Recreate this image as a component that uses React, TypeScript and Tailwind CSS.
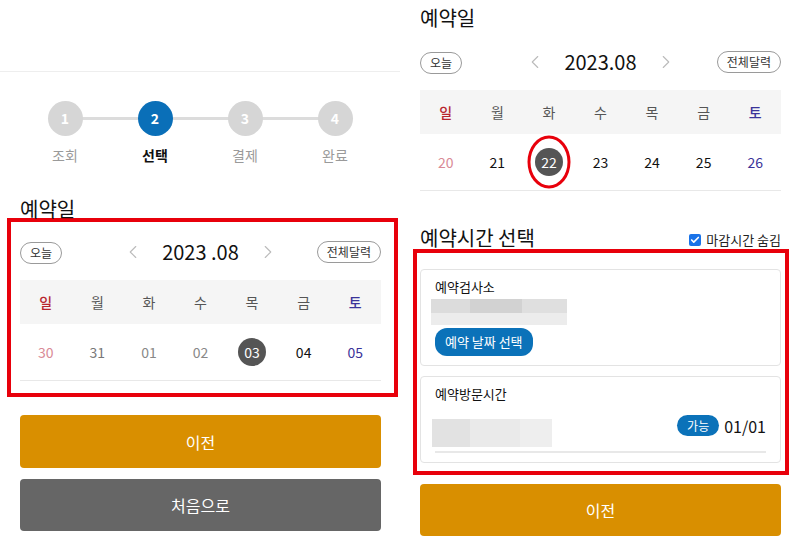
import { ChevronLeft, ChevronRight, Check } from 'lucide-react'

const FONT = { fontFamily: '"Noto Sans CJK KR", "Noto Sans", sans-serif' }

const WEEK = [
  { d: '일', c: 'font-medium text-[#b8262e]' },
  { d: '월', c: 'text-[#555]' },
  { d: '화', c: 'text-[#555]' },
  { d: '수', c: 'text-[#555]' },
  { d: '목', c: 'text-[#555]' },
  { d: '금', c: 'text-[#555]' },
  { d: '토', c: 'font-medium text-[#3a3399]' },
]

type Day = { n: string; c: string; sel?: boolean; mark?: boolean }

function Pill({ label }: { label: string }) {
  return (
    <span className="inline-flex h-[22px] items-center rounded-full border border-[#9a9a9a] px-[9px] text-[12px] leading-none text-[#333]">
      {label}
    </span>
  )
}

function Calendar({ title, days }: { title: string; days: Day[] }) {
  return (
    <div>
      <div className="grid grid-cols-[1fr_auto_1fr] items-center">
        <div>
          <Pill label="오늘" />
        </div>
        <div className="flex items-center gap-[18px]">
          <ChevronLeft className="h-[22px] w-[22px] text-[#bbb]" strokeWidth={1.2} />
          <span className="text-[20px] leading-none text-[#111]">{title}</span>
          <ChevronRight className="h-[22px] w-[22px] text-[#bbb]" strokeWidth={1.2} />
        </div>
        <div className="flex justify-end">
          <Pill label="전체달력" />
        </div>
      </div>
      <div className="mt-[16px] grid h-[44px] grid-cols-7 items-center bg-[#f5f5f5] text-[14px]">
        {WEEK.map((w) => (
          <span key={w.d} className={`text-center ${w.c}`}>
            {w.d}
          </span>
        ))}
      </div>
      <div className="grid h-[57px] grid-cols-7 items-center border-b border-[#e8e8e8] text-[14px]">
        {days.map((d) => (
          <div key={d.n} className="relative flex justify-center">
            {d.sel ? (
              <span className="flex h-[28px] w-[28px] items-center justify-center rounded-full bg-[#555] text-white">
                {d.n}
              </span>
            ) : (
              <span className={d.c}>{d.n}</span>
            )}
            {d.mark && (
              <span className="absolute left-1/2 top-1/2 h-[53px] w-[43px] -translate-x-1/2 -translate-y-1/2 rounded-[50%] border-[3px] border-[#e8000b]" />
            )}
          </div>
        ))}
      </div>
    </div>
  )
}

const STEPS = ['조회', '선택', '결제', '완료']

function Stepper() {
  return (
    <div className="relative mx-auto mt-[29px] w-[360px]">
      <div className="absolute left-[45px] right-[45px] top-[16px] h-[3px] bg-[#dcdcdc]" />
      <div className="relative grid grid-cols-4">
        {STEPS.map((s, i) => (
          <div key={s} className="flex flex-col items-center">
            <span
              className={`flex h-[35px] w-[35px] items-center justify-center rounded-full text-[14px] font-bold text-white ${
                i === 1 ? 'bg-[#0a6fb8]' : 'bg-[#d6d6d6]'
              }`}
            >
              {i + 1}
            </span>
            <span
              className={`mt-[9px] text-[14px] leading-[20px] ${
                i === 1 ? 'font-bold text-[#111]' : 'text-[#9a9a9a]'
              }`}
            >
              {s}
            </span>
          </div>
        ))}
      </div>
    </div>
  )
}

function LeftPanel() {
  const days: Day[] = [
    { n: '30', c: 'text-[#d98a96]' },
    { n: '31', c: 'text-[#777]' },
    { n: '01', c: 'text-[#888]' },
    { n: '02', c: 'text-[#888]' },
    { n: '03', c: '', sel: true },
    { n: '04', c: 'text-[#111]' },
    { n: '05', c: 'text-[#3a3399]' },
  ]
  return (
    <div className="w-[400px]">
      <div className="h-[72px] border-b border-[#eeeeee]" />
      <Stepper />
      <h2 className="ml-[20px] mt-[33px] h-[22px] text-[20px] leading-[22px] text-[#111]">예약일</h2>
      <div className="ml-[7px] mr-[2px] -mt-[2px] border-4 border-[#e8000b] pb-[12px] pl-[9px] pr-[13px] pt-[17px]">
        <Calendar title="2023 .08" days={days} />
      </div>
      <div className="ml-[20px] mr-[19px] mt-[18px] flex flex-col gap-[11px]">
        <button className="h-[53px] rounded-[4px] bg-[#d98f00] text-[16px] text-white">이전</button>
        <button className="h-[52px] rounded-[4px] bg-[#666666] text-[16px] text-white">처음으로</button>
      </div>
    </div>
  )
}

function RightPanel() {
  const days: Day[] = [
    { n: '20', c: 'text-[#d98a96]' },
    { n: '21', c: 'text-[#111]' },
    { n: '22', c: '', sel: true, mark: true },
    { n: '23', c: 'text-[#111]' },
    { n: '24', c: 'text-[#111]' },
    { n: '25', c: 'text-[#111]' },
    { n: '26', c: 'text-[#3a3399]' },
  ]
  return (
    <div className="w-[400px] pl-[20px] pr-[19px]">
      <h2 className="mt-[7px] h-[22px] text-[20px] leading-[22px] text-[#111]">예약일</h2>
      <div className="mt-[20px]">
        <Calendar title="2023.08" days={days} />
      </div>
      <div className="mt-[36px] flex items-end justify-between">
        <h2 className="h-[22px] text-[20px] leading-[22px] text-[#111]">예약시간 선택</h2>
        <label className="flex items-center gap-[5px] pb-[1px] text-[13px] leading-[16px] text-[#222]">
          <span className="flex h-[12px] w-[12px] items-center justify-center rounded-[2px] bg-[#1a73e8]">
            <Check className="h-[10px] w-[10px] text-white" strokeWidth={4} />
          </span>
          마감시간 숨김
        </label>
      </div>
      <div className="-ml-[7px] -mr-[8px] flex flex-col gap-[10px] border-4 border-[#e8000b] pb-[8px] pl-[3px] pr-[4px] pt-[16px]">
        <div className="h-[97px] rounded-[4px] border border-[#e3e3e3] pl-[14px] pt-[8px]">
          <div className="text-[13px] leading-[18px] text-[#111]">예약검사소</div>
          <div className="-ml-[4px] mt-[3px] w-[136px]">
            <div className="flex h-[14px]">
              <span className="w-[39px] bg-[#dcdcdc]" />
              <span className="w-[52px] bg-[#d2d2d2]" />
              <span className="w-[45px] bg-[#dfdfdf]" />
            </div>
            <div className="h-[12px] bg-[#ececec]" />
          </div>
          <button className="mt-[3px] h-[28px] rounded-[12px] bg-[#0b72b9] px-[10px] text-[13px] text-white">
            예약 날짜 선택
          </button>
        </div>
        <div className="h-[87px] rounded-[4px] border border-[#e3e3e3] px-[14px] pt-[8px]">
          <div className="text-[13px] leading-[18px] text-[#111]">예약방문시간</div>
          <div className="mt-[1px] flex items-center justify-between">
            <div className="-ml-[3px] mt-[15px] flex h-[28px] w-[120px]">
              <span className="w-[38px] bg-[#e2e2e2]" />
              <span className="w-[50px] bg-[#eaeaea]" />
              <span className="w-[32px] bg-[#eeeeee]" />
            </div>
            <div className="flex items-center gap-[5px]">
              <span className="flex h-[21px] items-center rounded-full bg-[#0b72b9] px-[10px] text-[12px] text-white">
                가능
              </span>
              <span className="text-[16px] text-[#111]">01/01</span>
            </div>
          </div>
          <div className="mt-[4px] h-[2px] bg-[#e8e8e8]" />
        </div>
      </div>
      <button className="mt-[9px] h-[52px] w-full rounded-[4px] bg-[#d98f00] text-[16px] text-white">이전</button>
    </div>
  )
}

export default function App() {
  return (
    <div className="flex h-[542px] w-[800px] overflow-hidden bg-white" style={FONT}>
      <LeftPanel />
      <RightPanel />
    </div>
  )
}
